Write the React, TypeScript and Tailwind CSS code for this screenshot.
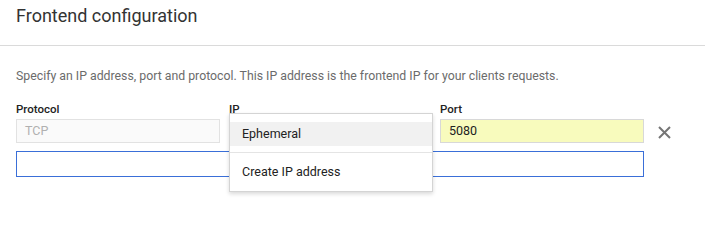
export default function App() {
  return (
    <div className="w-[705px] h-[240px] bg-white font-['Roboto',sans-serif] text-[#212121] overflow-hidden">
      <div className="h-[46px] border-b border-[#dadada] px-4 pt-[4px]">
        <h1 className="text-[18px] leading-[24px] text-[#333]">Frontend configuration</h1>
      </div>

      <div className="px-4">
        <p className="mt-[22px] text-[12.3px] leading-[16px] text-[#6b6b6b]">
          Specify an IP address, port and protocol. This IP address is the frontend IP for your clients requests.
        </p>

        <div className="mt-[18px] flex items-start">
          <div className="w-[204px]">
            <label className="block text-[11.5px] leading-[14px] font-medium text-[#222]">Protocol</label>
            <div className="mt-[3px] h-[24px] border border-[#e2e2e2] bg-[#fafafa] px-[8px] flex items-center text-[12.5px] text-[#b0b0b0]">
              TCP
            </div>
          </div>

          <div className="relative ml-[9px] w-[204px]">
            <label className="block text-[11.5px] leading-[14px] font-medium text-[#222]">IP</label>
            <div className="mt-[3px] h-[24px]" />

            <div className="absolute left-0 top-[11px] z-10 w-[204px] h-[79px] bg-white border border-[#d4d4d4] shadow-[0_2px_4px_rgba(0,0,0,0.15)] pt-[8px]">
              <div className="h-[24px] bg-[#f1f1f1] pl-[12px] flex items-center text-[12.5px] text-[#222]">Ephemeral</div>
              <div className="mt-[6px] border-t border-[#e4e4e4]" />
              <div className="h-[38px] pl-[12px] flex items-center text-[12.5px] text-[#222]">Create IP address</div>
            </div>
          </div>

          <div className="ml-[7px] w-[204px]">
            <label className="block text-[11.5px] leading-[14px] font-medium text-[#222]">Port</label>
            <div className="mt-[3px] h-[24px] border border-[#d8d8d8] bg-[#f8fbbd] px-[8px] flex items-center text-[12.5px] text-[#222]">
              5080
            </div>
          </div>

          <button className="ml-[13px] mt-[23px] w-[14px] h-[14px] flex items-center justify-center text-[#757575]">
            <svg width="13" height="13" viewBox="0 0 13 13" fill="none" stroke="currentColor" strokeWidth="2">
              <path d="M1 1L12 12M12 1L1 12" />
            </svg>
          </button>
        </div>

        <div className="mt-[8px] w-[628px] h-[26px] border border-[#3a6fd8]" />
      </div>
    </div>
  )
}
